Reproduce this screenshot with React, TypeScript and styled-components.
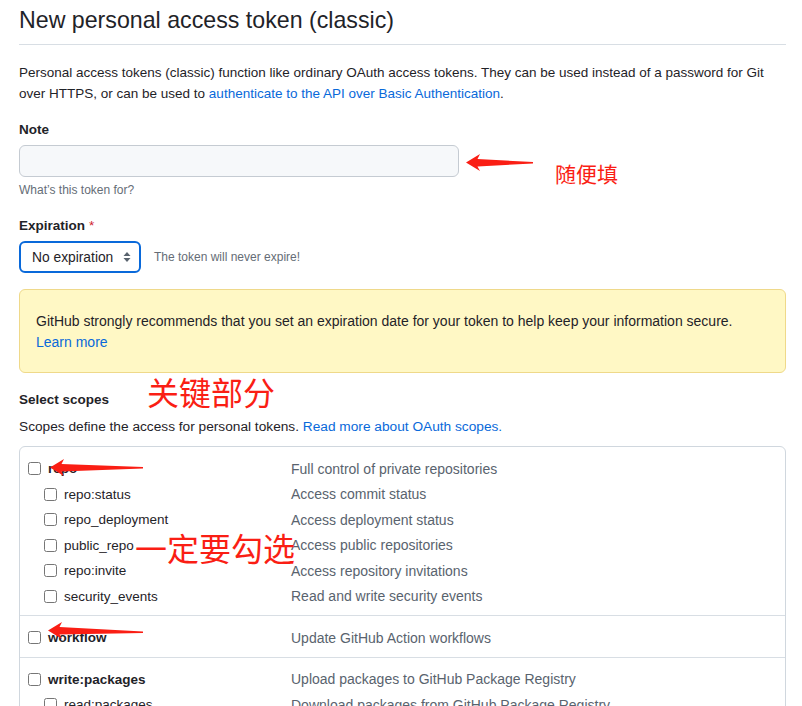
import React from "react";
import styled, { createGlobalStyle } from "styled-components";

const Global = createGlobalStyle`
  html, body { margin: 0; padding: 0; background: #ffffff; }
  body { font-family: "Liberation Sans", Arial, sans-serif; color: #1f2328; }
  * { box-sizing: border-box; }
`;

const Page = styled.div`
  position: relative;
  width: 802px;
  height: 706px;
  overflow: hidden;
  padding: 0 16px 0 19px;
`;

const Header = styled.div`
  border-bottom: 1px solid #d8dee4;
  padding: 4px 0 8px;
`;

const Title = styled.h1`
  margin: 0;
  font-size: 23.2px;
  font-weight: 400;
  line-height: 32px;
  color: #1f2328;
`;

const Intro = styled.p`
  margin: 17px 0 0;
  font-size: 13.5px;
  line-height: 21px;
`;

const Link = styled.a`
  color: #0969da;
  text-decoration: none;
`;

const Field = styled.div<{ $mt: number }>`
  margin-top: ${(p) => p.$mt}px;
`;

const Label = styled.div`
  font-size: 13.5px;
  font-weight: 700;
  line-height: 21px;
`;

const Req = styled.span`
  color: #cf222e;
  font-weight: 400;
  margin-left: 4px;
`;

const TextInput = styled.div`
  margin-top: 5px;
  width: 440px;
  height: 32px;
  background: #f6f8fa;
  border: 1px solid #c5cbd2;
  border-radius: 6px;
`;

const Note = styled.div`
  margin-top: 4px;
  font-size: 12px;
  line-height: 18px;
  color: #656d76;
`;

const SelectRow = styled.div`
  margin-top: 5px;
  display: flex;
  align-items: center;
  gap: 13px;
`;

const Select = styled.div`
  width: 122px;
  height: 32px;
  border: 2px solid #0969da;
  border-radius: 6px;
  display: flex;
  align-items: center;
  justify-content: space-between;
  padding: 0 8px 0 11px;
  font-size: 13.8px;
  color: #1f2328;
`;

const Hint = styled.span`
  font-size: 12px;
  color: #656d76;
`;

const Flash = styled.div`
  margin-top: 16px;
  background: #fff8c5;
  border: 1px solid #efd98a;
  border-radius: 6px;
  padding: 21px 16px 19px;
  font-size: 14px;
  line-height: 21px;
`;

const SectionTitle = styled.div`
  margin-top: 16px;
  font-size: 13.5px;
  font-weight: 700;
  line-height: 21px;
`;

const SectionDesc = styled.div`
  margin-top: 6px;
  font-size: 13.7px;
  line-height: 21px;
`;

const ScopeBox = styled.div`
  margin-top: 9px;
  border: 1px solid #d0d7de;
  border-radius: 6px;
`;

const Group = styled.div`
  padding: 9px 0 6px;
  & + & { border-top: 1px solid #d8dee4; }
`;

const Row = styled.div<{ $indent: number }>`
  display: flex;
  align-items: center;
  height: 25.5px;
  padding-left: ${(p) => 8 + p.$indent}px;
`;

const Box = styled.span`
  width: 13px;
  height: 13px;
  border: 1px solid #767676;
  border-radius: 2.5px;
  background: #fff;
  flex: none;
`;

const Name = styled.span<{ $indent: number; $bold: boolean }>`
  width: ${(p) => 243 - p.$indent}px;
  margin-left: 7px;
  font-size: 13.5px;
  font-weight: ${(p) => (p.$bold ? 700 : 400)};
  color: #1f2328;
`;

const Desc = styled.span`
  font-size: 14px;
  color: #59636e;
`;

const Annot = styled.div<{ $x: number; $y: number; $size: number }>`
  position: absolute;
  left: ${(p) => p.$x}px;
  top: ${(p) => p.$y}px;
  font-family: "Noto Sans CJK SC", sans-serif;
  font-size: ${(p) => p.$size}px;
  line-height: 1;
  color: #fa1e14;
  white-space: nowrap;
`;

const ArrowSvg = styled.svg<{ $x: number; $y: number }>`
  position: absolute;
  left: ${(p) => p.$x}px;
  top: ${(p) => p.$y}px;
  overflow: visible;
`;

const Arrow = ({ x, y, len, tilt = 0 }: { x: number; y: number; len: number; tilt?: number }) => (
  <ArrowSvg $x={x} $y={y - 8.5} width={len + 1} height={18} viewBox={`0 0 ${len + 1} 18`}>
    <polygon
      points={`0,8.5 14,0 11.5,5 ${len},${8 + tilt} ${len},${9.5 + tilt} 11.5,12.5 14,17`}
      fill="#fa1e14"
    />
  </ArrowSvg>
);

const SortIcon = () => (
  <svg width="8" height="12" viewBox="0 0 8 12">
    <path d="M4 1 L7.5 5 H0.5 Z M4 11 L0.5 7 H7.5 Z" fill="#59636e" />
  </svg>
);

type Scope = { name: string; desc: string; sub?: boolean };

const groups: Scope[][] = [
  [
    { name: "repo", desc: "Full control of private repositories" },
    { name: "repo:status", desc: "Access commit status", sub: true },
    { name: "repo_deployment", desc: "Access deployment status", sub: true },
    { name: "public_repo", desc: "Access public repositories", sub: true },
    { name: "repo:invite", desc: "Access repository invitations", sub: true },
    { name: "security_events", desc: "Read and write security events", sub: true },
  ],
  [{ name: "workflow", desc: "Update GitHub Action workflows" }],
  [
    { name: "write:packages", desc: "Upload packages to GitHub Package Registry" },
    { name: "read:packages", desc: "Download packages from GitHub Package Registry", sub: true },
  ],
];

export default function App() {
  return (
    <>
      <Global />
      <Page>
        <Header>
          <Title>New personal access token (classic)</Title>
        </Header>
        <Intro>
          Personal access tokens (classic) function like ordinary OAuth access tokens. They can be used instead of a password for Git over HTTPS, or can be used to{" "}
          <Link>authenticate to the API over Basic Authentication</Link>.
        </Intro>

        <Field $mt={15}>
          <Label>Note</Label>
          <TextInput />
          <Note>What’s this token for?</Note>
        </Field>

        <Field $mt={16}>
          <Label>
            Expiration<Req>*</Req>
          </Label>
          <SelectRow>
            <Select>
              <span>No expiration</span>
              <SortIcon />
            </Select>
            <Hint>The token will never expire!</Hint>
          </SelectRow>
        </Field>

        <Flash>
          GitHub strongly recommends that you set an expiration date for your token to help keep your information secure.
          <br />
          <Link>Learn more</Link>
        </Flash>

        <SectionTitle>Select scopes</SectionTitle>
        <SectionDesc>
          Scopes define the access for personal tokens. <Link>Read more about OAuth scopes.</Link>
        </SectionDesc>

        <ScopeBox>
          {groups.map((g, gi) => (
            <Group key={gi}>
              {g.map((s) => {
                const indent = s.sub ? 16 : 0;
                return (
                  <Row key={s.name} $indent={indent}>
                    <Box />
                    <Name $indent={indent} $bold={!s.sub}>
                      {s.name}
                    </Name>
                    <Desc>{s.desc}</Desc>
                  </Row>
                );
              })}
            </Group>
          ))}
        </ScopeBox>

        <Arrow x={466} y={162} len={67} />
        <Arrow x={50} y={467} len={93} />
        <Arrow x={48} y={630} len={95} tilt={1.5} />
        <Annot $x={555} $y={163} $size={21}>随便填</Annot>
        <Annot $x={147} $y={375} $size={32}>关键部分</Annot>
        <Annot $x={135} $y={531} $size={32}>一定要勾选</Annot>
      </Page>
    </>
  );
}
